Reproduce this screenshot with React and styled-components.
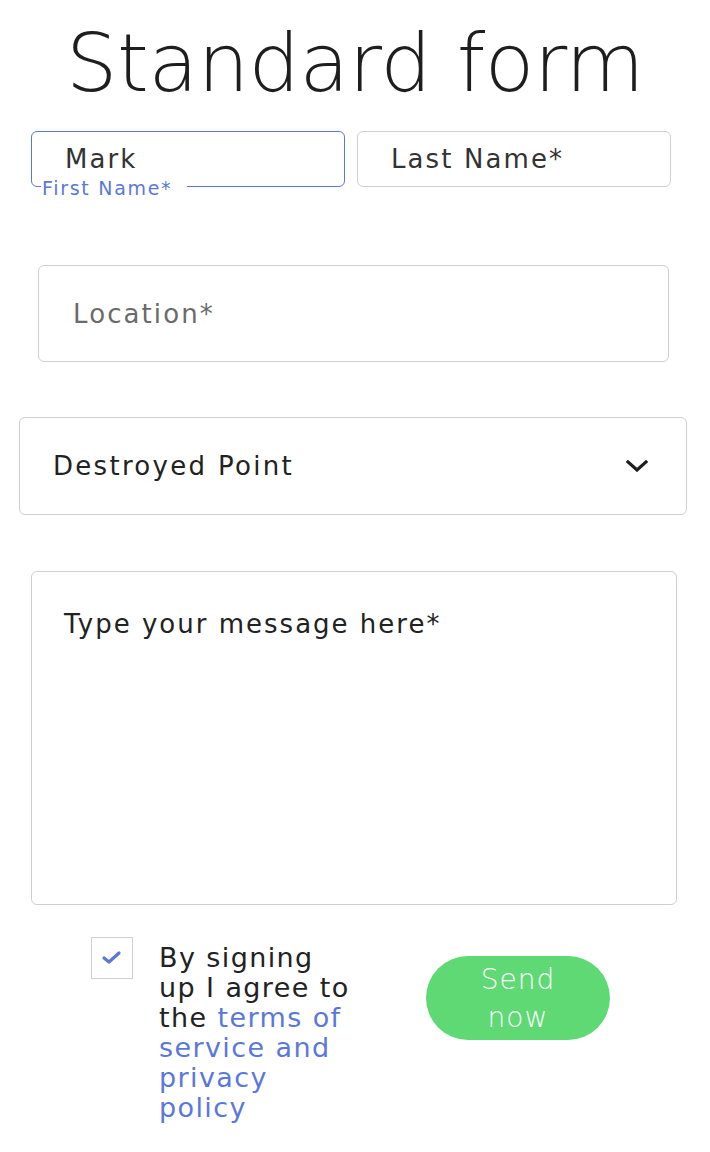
import React from "react";
import styled, { createGlobalStyle } from "styled-components";

const COLORS = {
  BLUE: "#5a78dc",
  BORDER: "#cfcfcf",
  TEXT: "#2a2a2a",
  MUTED: "#6a6a6a",
  GREEN: "#5ed974",
};

const GlobalStyle = createGlobalStyle`
  html, body {
    margin: 0;
    padding: 0;
    background: #ffffff;
  }
  body {
    font-family: "DejaVu Sans", "Liberation Sans", sans-serif;
    color: ${COLORS.TEXT};
  }
`;

const Page = styled.div`
  width: 710px;
  min-height: 1152px;
  display: flex;
  flex-direction: column;
  padding-top: 23px;
  box-sizing: border-box;
`;

const Title = styled.h1`
  margin: 0;
  text-align: center;
  font-size: 81px;
  line-height: 80px;
  font-weight: 200;
  letter-spacing: -0.4px;
  color: #1e1e1e;
`;

const NameRow = styled.div`
  display: flex;
  gap: 12px;
  margin: 28px 0 0 31px;
`;

const InputWrapper = styled.div`
  position: relative;
  width: 314px;
  height: 56px;
`;

const TextInput = styled.input`
  box-sizing: border-box;
  width: 100%;
  height: 100%;
  border: 1.5px solid ${(p) => (p.$focused ? COLORS.BLUE : COLORS.BORDER)};
  border-radius: 6px;
  padding: 0 0 0 ${(p) => p.$indent || 33}px;
  font-family: inherit;
  font-size: 26px;
  letter-spacing: 2.1px;
  color: #333333;
  outline: none;
  background: #ffffff;

  &::placeholder {
    color: ${(p) => p.$placeholder || "#333333"};
  }
`;

const FloatingLabel = styled.span`
  position: absolute;
  left: 10px;
  top: 47px;
  padding: 0 15px 0 1px;
  background: #ffffff;
  font-size: 19px;
  line-height: 20px;
  letter-spacing: 1.7px;
  color: ${COLORS.BLUE};
`;

const LocationInput = styled(TextInput)`
  width: 631px;
  height: 97px;
  margin: 78px 0 0 38px;
  padding-left: 34px;
`;

const SelectBox = styled.div`
  box-sizing: border-box;
  width: 668px;
  height: 98px;
  margin: 55px 0 0 19px;
  border: 1.5px solid ${COLORS.BORDER};
  border-radius: 6px;
  display: flex;
  align-items: center;
  justify-content: space-between;
  padding: 0 38px 0 33px;
  font-size: 26px;
  letter-spacing: 2.3px;
  color: #222222;
`;

const MessageArea = styled.textarea`
  box-sizing: border-box;
  width: 646px;
  height: 334px;
  margin: 56px 0 0 31px;
  border: 1.5px solid ${COLORS.BORDER};
  border-radius: 6px;
  padding: 37px 32px;
  resize: none;
  font-family: inherit;
  font-size: 26px;
  line-height: 30px;
  letter-spacing: 2px;
  outline: none;

  &::placeholder {
    color: #222222;
  }
`;

const FooterRow = styled.div`
  display: flex;
  align-items: flex-start;
  margin: 32px 0 0 91px;
`;

const CheckBox = styled.div`
  box-sizing: border-box;
  width: 42px;
  height: 42px;
  border: 1.5px solid ${COLORS.BORDER};
  display: flex;
  align-items: center;
  justify-content: center;
  flex-shrink: 0;
`;

const AgreeText = styled.p`
  margin: 6px 0 0 26px;
  width: 200px;
  font-size: 27px;
  line-height: 30px;
  letter-spacing: 1.4px;
  color: #222222;
`;

const TermsLink = styled.span`
  color: ${COLORS.BLUE};
`;

const SendButton = styled.button`
  width: 184px;
  height: 84px;
  margin: 19px 0 0 67px;
  border: none;
  border-radius: 42px;
  background: ${COLORS.GREEN};
  color: #ffffff;
  font-family: inherit;
  font-size: 28px;
  font-weight: 200;
  line-height: 38px;
  letter-spacing: 1px;
  padding: 2px 0 0;
`;

const Chevron = () => (
  <svg width="22" height="12" viewBox="0 0 22 12">
    <polyline
      points="2,2 11,10 20,2"
      fill="none"
      stroke="#1e1e1e"
      strokeWidth="3.2"
      strokeLinecap="square"
    />
  </svg>
);

const Check = () => (
  <svg width="22" height="18" viewBox="0 0 22 18">
    <polyline
      points="3,9 8,13 18,4"
      fill="none"
      stroke={COLORS.BLUE}
      strokeWidth="3.2"
      strokeLinecap="round"
      strokeLinejoin="round"
    />
  </svg>
);

export default function App() {
  return (
    <>
      <GlobalStyle />
      <Page>
        <Title>Standard form</Title>
        <NameRow>
          <InputWrapper>
            <TextInput $focused defaultValue="Mark" readOnly />
            <FloatingLabel>First Name*</FloatingLabel>
          </InputWrapper>
          <InputWrapper>
            <TextInput placeholder="Last Name*" />
          </InputWrapper>
        </NameRow>
        <LocationInput placeholder="Location*" $placeholder={COLORS.MUTED} />
        <SelectBox>
          <span>Destroyed Point</span>
          <Chevron />
        </SelectBox>
        <MessageArea placeholder="Type your message here*" />
        <FooterRow>
          <CheckBox>
            <Check />
          </CheckBox>
          <AgreeText>
            By signing
            <br />
            up I agree to
            <br />
            the <TermsLink>terms of</TermsLink>
            <br />
            <TermsLink>service and</TermsLink>
            <br />
            <TermsLink>privacy</TermsLink>
            <br />
            <TermsLink>policy</TermsLink>
          </AgreeText>
          <SendButton>
            Send
            <br />
            now
          </SendButton>
        </FooterRow>
      </Page>
    </>
  );
}
